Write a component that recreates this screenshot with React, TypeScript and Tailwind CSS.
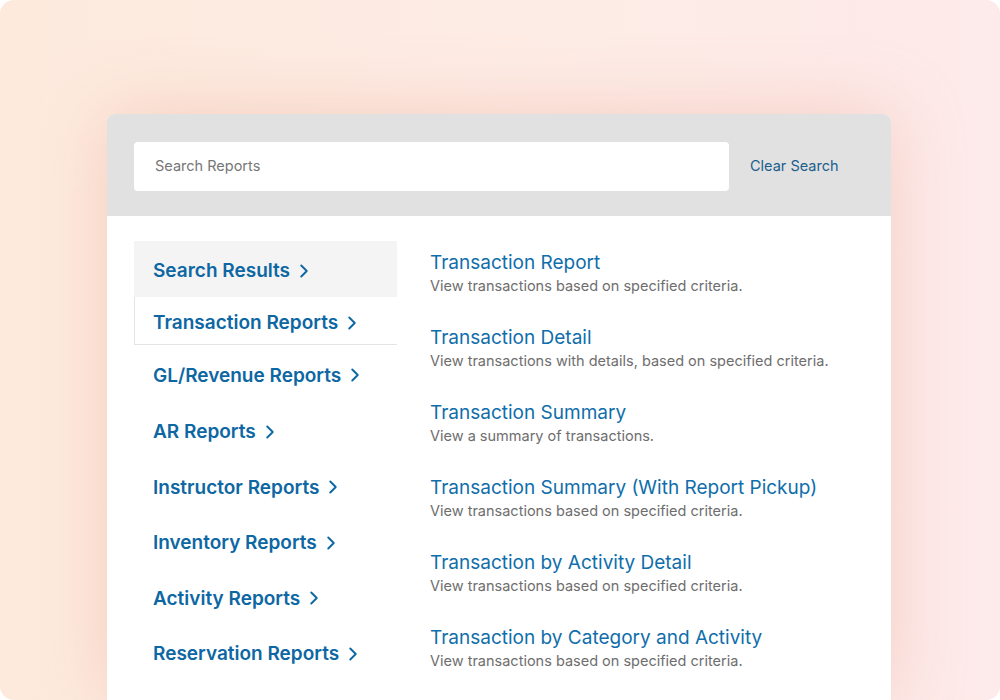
import { ChevronRight } from 'lucide-react';

const categories = [
  { label: 'Search Results', h: 'h-[56px] pt-[3px]', active: true },
  { label: 'Transaction Reports', h: 'h-[48px] pt-[4px]', bordered: true },
  { label: 'GL/Revenue Reports', h: 'h-[58px] pt-[2px]' },
  { label: 'AR Reports', h: 'h-[55px] pt-[2px]' },
  { label: 'Instructor Reports', h: 'h-[56px] pt-[2px]' },
  { label: 'Inventory Reports', h: 'h-[55px] pt-[2px]' },
  { label: 'Activity Reports', h: 'h-[56px] pt-[2px]' },
  { label: 'Reservation Reports', h: 'h-[55px] pt-[2px]' },
];

const reports = [
  { title: 'Transaction Report', desc: 'View transactions based on specified criteria.' },
  { title: 'Transaction Detail', desc: 'View transactions with details, based on specified criteria.' },
  { title: 'Transaction Summary', desc: 'View a summary of transactions.' },
  { title: 'Transaction Summary (With Report Pickup)', desc: 'View transactions based on specified criteria.' },
  { title: 'Transaction by Activity Detail', desc: 'View transactions based on specified criteria.' },
  { title: 'Transaction by Category and Activity', desc: 'View transactions based on specified criteria.' },
];

export default function App() {
  return (
    <div className="w-[1000px] h-[700px] bg-white font-['Inter',sans-serif]">
      <div className="h-full w-full rounded-[14px] overflow-hidden bg-gradient-to-r from-[#fdeadd] via-[#fdece5] to-[#fdeaea] pt-[114px] pl-[107px]">
        <div className="w-[784px] h-[586px] bg-white rounded-t-[8px] overflow-hidden shadow-[0_0_70px_rgba(238,170,150,0.45)]">
          <div className="h-[102px] bg-[#e1e1e1] flex items-center px-[27px] gap-[21px] pt-[2px]">
            <div className="w-[595px] h-[49px] bg-white rounded-[4px] flex items-center px-[21px]">
              <span className="text-[14.5px] text-[#767676]">Search Reports</span>
            </div>
            <span className="text-[14.5px] text-[#1c5f8c]">Clear Search</span>
          </div>
          <div className="flex pl-[27px]">
            <div className="w-[263px] pt-[25px] shrink-0">
              {categories.map((c) => (
                <div
                  key={c.label}
                  className={`${c.h} flex items-center gap-[3px] ${
                    c.active ? 'bg-[#f4f4f4]' : ''
                  } ${c.bordered ? 'border-l border-b border-[#e4e4e4] pl-[18px]' : 'pl-[19px]'}`}
                >
                  <span className="text-[19px] font-semibold text-[#0d67a3] leading-none">{c.label}</span>
                  <ChevronRight className="w-[22px] h-[22px] text-[#0d67a3]" strokeWidth={2.1} />
                </div>
              ))}
            </div>
            <div className="pl-[33px] pt-[35px] flex flex-col">
              {reports.map((r) => (
                <div key={r.title} className="h-[75px]">
                  <div className="text-[19px] leading-[24px] text-[#0f6eab]">{r.title}</div>
                  <div className="text-[14.5px] leading-[20px] mt-[1px] text-[#6e6e6e]">{r.desc}</div>
                </div>
              ))}
            </div>
          </div>
        </div>
      </div>
    </div>
  );
}
